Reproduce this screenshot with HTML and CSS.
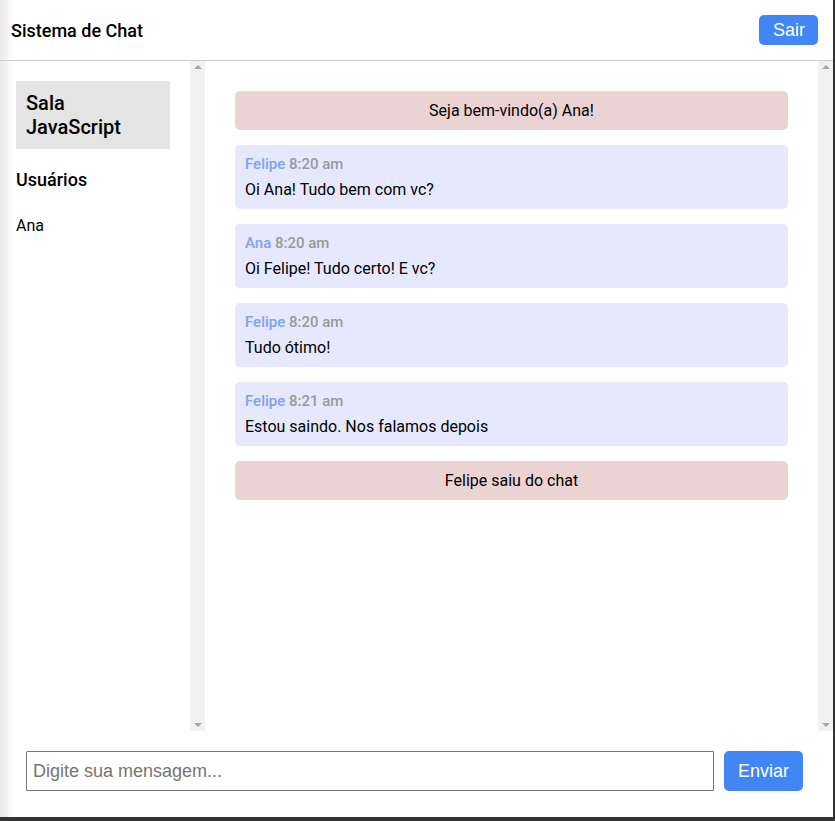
FILE: index.html
```html
<!DOCTYPE html>
<html lang="pt-BR">
<head>
<meta charset="utf-8">
<title>Sistema de Chat</title>
<link rel="stylesheet" href="styles.css">
</head>
<body>
<div class="app">
  <header class="topbar">
    <h1 class="title">Sistema de Chat</h1>
    <button class="btn btn-sair">Sair</button>
  </header>
  <div class="main">
    <aside class="sidebar">
      <h2 class="room">Sala JavaScript</h2>
      <h3 class="users-title">Usuários</h3>
      <ul class="users">
        <li>Ana</li>
      </ul>
    </aside>
    <div class="scrollbar" aria-hidden="true"><span class="arrow up"></span><span class="arrow down"></span></div>
    <section class="messages">
      <div class="sys">Seja bem-vindo(a) Ana!</div>
      <div class="msg">
        <p class="meta"><span class="name">Felipe</span> <span class="time">8:20 am</span></p>
        <p class="text">Oi Ana! Tudo bem com vc?</p>
      </div>
      <div class="msg">
        <p class="meta"><span class="name">Ana</span> <span class="time">8:20 am</span></p>
        <p class="text">Oi Felipe! Tudo certo! E vc?</p>
      </div>
      <div class="msg">
        <p class="meta"><span class="name">Felipe</span> <span class="time">8:20 am</span></p>
        <p class="text">Tudo ótimo!</p>
      </div>
      <div class="msg">
        <p class="meta"><span class="name">Felipe</span> <span class="time">8:21 am</span></p>
        <p class="text">Estou saindo. Nos falamos depois</p>
      </div>
      <div class="sys">Felipe saiu do chat</div>
    </section>
    <div class="scrollbar" aria-hidden="true"><span class="arrow up"></span><span class="arrow down"></span></div>
  </div>
  <footer class="composer">
    <input class="input" type="text" placeholder="Digite sua mensagem...">
    <button class="btn btn-enviar">Enviar</button>
  </footer>
</div>
</body>
</html>
```
FILE: styles.css
```css
* { box-sizing: border-box; }
html, body { margin: 0; padding: 0; }
body {
  background: #333;
  font-family: Roboto, "Liberation Sans", sans-serif;
  color: #000;
}
.app {
  width: 833px;
  height: 817px;
  background: #fff;
  box-shadow: inset 14px 0 12px -8px rgba(0,0,0,0.10);
  display: flex;
  flex-direction: column;
}
.topbar {
  height: 61px;
  flex: none;
  border-bottom: 1px solid #ccc;
  display: flex;
  align-items: center;
  justify-content: space-between;
  padding: 0 15px 0 11px;
}
.title {
  margin: 0;
  font-size: 18px;
  font-weight: 500;
}
.btn {
  background: #4285f4;
  color: #fff;
  border: none;
  border-radius: 5px;
  font-family: "Liberation Sans", Arial, sans-serif;
  font-size: 18px;
  cursor: pointer;
}
.btn-sair {
  height: 30px;
  padding: 0 13px 0 14px;
}
.main {
  flex: 1;
  display: flex;
  min-height: 0;
}
.sidebar {
  width: 190px;
  flex: none;
  overflow: hidden;
  padding: 20px 20px 20px 16px;
}
.scrollbar {
  width: 15px;
  flex: none;
  background: #f1f1f1;
  display: flex;
  flex-direction: column;
  justify-content: space-between;
  align-items: center;
  padding: 4px 0;
}
.arrow {
  width: 0;
  height: 0;
  border-left: 4px solid transparent;
  border-right: 4px solid transparent;
}
.arrow.up { border-bottom: 4px solid #a3a3a3; }
.arrow.down { border-top: 4px solid #a3a3a3; }
.room {
  margin: 0;
  background: #e4e4e4;
  padding: 10px;
  font-size: 20px;
  font-weight: 500;
  line-height: 24px;
}
.users-title {
  margin: 20px 0 0;
  font-size: 18px;
  font-weight: 500;
  line-height: 21px;
}
.users {
  list-style: none;
  margin: 26px 0 0;
  padding: 0;
  font-size: 16px;
  line-height: 19px;
}
.messages {
  flex: 1;
  overflow: hidden;
  padding: 30px;
  display: flex;
  flex-direction: column;
  gap: 15px;
}
.sys {
  background: #ebd3d3;
  border-radius: 5px;
  padding: 10px;
  text-align: center;
  font-size: 16px;
  line-height: 19px;
}
.msg {
  background: #e6e8fe;
  border-radius: 5px;
  padding: 10px;
}
.meta {
  margin: 0 0 7px;
  font-size: 15px;
  line-height: 18px;
  font-weight: 500;
}
.name { color: #7ba2f4; }
.time { color: #999; }
.text {
  margin: 0;
  font-size: 16px;
  line-height: 19px;
}
.composer {
  flex: none;
  display: flex;
  gap: 10px;
  padding: 20px 30px 26px 26px;
}
.input {
  flex: 1;
  height: 40px;
  border: 1px solid #767676;
  border-radius: 1px;
  padding: 0 6px;
  font-family: "Liberation Sans", Arial, sans-serif;
  font-size: 18px;
  color: #000;
}
.input::placeholder { color: #757575; }
.btn-enviar {
  height: 40px;
  padding: 0 14px;
}
```
